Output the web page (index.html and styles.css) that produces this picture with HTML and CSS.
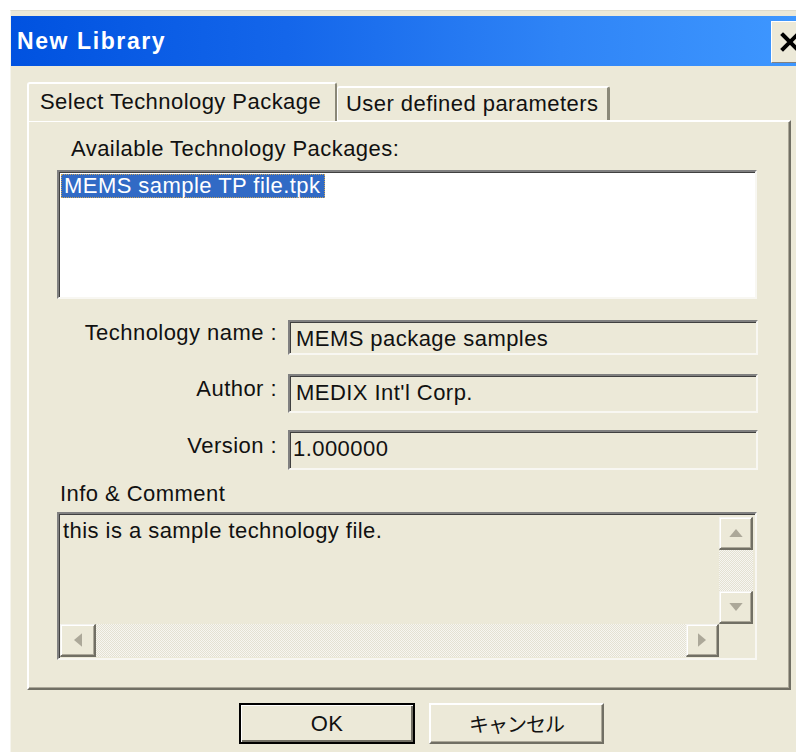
FILE: index.html
```html
<!DOCTYPE html>
<html lang="en">
<head>
<meta charset="utf-8">
<title>New Library</title>
<link rel="stylesheet" href="styles.css">
</head>
<body>
<div class="window">
  <div class="titlebar">
    <span class="title">New Library</span>
    <span class="close" aria-label="Close">
      <svg viewBox="0 0 20 20" width="20" height="20"><path d="M3 3 L17 17 M17 3 L3 17" stroke="#000" stroke-width="4" stroke-linecap="square"/></svg>
    </span>
  </div>
  <div class="client">
    <div class="tabs">
      <div class="tab active">Select Technology Package</div>
      <div class="tab">User defined parameters</div>
    </div>
    <div class="panel">
      <div class="caption list-caption">Available Technology Packages:</div>
      <div class="listbox sunken">
        <span class="item selected">MEMS sample TP file.tpk</span>
      </div>
      <div class="row row-name">
        <span class="label">Technology name :</span>
        <div class="field sunken">MEMS package samples</div>
      </div>
      <div class="row row-author">
        <span class="label">Author :</span>
        <div class="field sunken">MEDIX Int'l Corp.</div>
      </div>
      <div class="row row-version">
        <span class="label">Version :</span>
        <div class="field sunken">1.000000</div>
      </div>
      <div class="caption info-caption">Info &amp; Comment</div>
      <div class="memo sunken">
        <div class="memo-text">this is a sample technology file.</div>
        <div class="vscroll">
          <span class="sbtn"><svg viewBox="0 0 10 6" width="14" height="8"><path d="M5 0 L10 6 L0 6 Z" fill="#ACA899"/></svg></span>
          <span class="strack"></span>
          <span class="sbtn"><svg viewBox="0 0 10 6" width="14" height="8"><path d="M0 0 L10 0 L5 6 Z" fill="#ACA899"/></svg></span>
        </div>
        <div class="hscroll">
          <span class="sbtn wide"><svg viewBox="0 0 6 10" width="8" height="14"><path d="M6 0 L6 10 L0 5 Z" fill="#ACA899"/></svg></span>
          <span class="strack"></span>
          <span class="sbtn"><svg viewBox="0 0 6 10" width="8" height="14"><path d="M0 0 L6 5 L0 10 Z" fill="#ACA899"/></svg></span>
        </div>
        <div class="corner"></div>
      </div>
    </div>
    <div class="buttons">
      <button class="btn default" type="button"><span>OK</span></button>
      <button class="btn" type="button"><span class="jp">キャンセル</span></button>
    </div>
  </div>
</div>
</body>
</html>
```

FILE: styles.css
```css
html, body {
  margin: 0;
  padding: 0;
  background: #ffffff;
}

body {
  font-family: "Liberation Sans", "Noto Sans CJK JP", sans-serif;
  font-size: 22px;
  letter-spacing: 0.45px;
  color: #111111;
  overflow: hidden;
}

/* dialog frame */
.window {
  margin: 10px 0 0 10px;
  height: 742px;
  background: #ECE9D8;
  border-top: 1px solid #DEDBCB;
  border-left: 1px solid #F6F5EE;
  padding-top: 5px;
  box-sizing: border-box;
}

.titlebar {
  height: 50px;
  display: flex;
  align-items: center;
  background: linear-gradient(to right, #0052E0 0%, #1466EA 35%, #2F84F6 70%, #3E97FF 100%);
  padding-left: 6px;
}

.title {
  color: #ffffff;
  font-weight: bold;
  font-size: 23px;
  letter-spacing: 1.6px;
}

.close {
  margin-left: auto;
  width: 24px;
  height: 40px;
  margin-top: 1px;
  background: #ECE9D8;
  border-top: 1px solid #ffffff;
  border-left: 1px solid #ffffff;
  border-bottom: 1px solid #808080;
  display: flex;
  align-items: center;
  justify-content: flex-end;
  overflow: hidden;
}

.close svg {
  margin-right: -4px;
}

.client {
  padding: 16px 0 0 16px;
}

/* tab strip */
.tabs {
  display: flex;
  align-items: flex-end;
  height: 38px;
}

.tab {
  box-sizing: border-box;
  background: #ECE9D8;
  border-top: 2px solid #ffffff;
  border-left: 2px solid #ffffff;
  border-right: 3px solid #8A8878;
  border-radius: 3px 3px 0 0;
  white-space: nowrap;
}

.tab.active {
  width: 310px;
  height: 39px;
  padding: 5px 0 0 11px;
  position: relative;
  z-index: 1;
  margin-bottom: -1px;
  border-right: 2px solid #8A8878;
}

.tab:not(.active) {
  width: 273px;
  height: 34px;
  padding: 3px 0 0 8px;
  border-left: 1px solid #ffffff;
}

.panel {
  box-sizing: border-box;
  width: 764px;
  height: 570px;
  border-top: 2px solid #ffffff;
  border-left: 2px solid #ffffff;
  border-right: 2px solid #716F64;
  border-bottom: 2px solid #716F64;
  box-shadow: inset -1px -1px 0 #ACA899;
  display: flex;
  flex-direction: column;
}

.caption {
  line-height: 24px;
}

.list-caption {
  margin: 15px 0 0 42px;
}

/* sunken 3D edge used by list, fields and memo */
.sunken {
  box-sizing: border-box;
  border-top: 2px solid #808080;
  border-left: 2px solid #808080;
  border-right: 2px solid #F8F7F2;
  border-bottom: 2px solid #F8F7F2;
  box-shadow: inset 1px 1px 0 #404040;
}

.listbox {
  margin: 9px 0 0 28px;
  width: 700px;
  height: 129px;
  background: #ffffff;
  padding: 1px 0 0 2px;
}

.item {
  display: inline-block;
  line-height: 24px;
  padding: 0 4px 0 3px;
}

.item.selected {
  background: #316AC5;
  color: #ffffff;
  outline: 1px dotted #C9A45A;
  outline-offset: -1px;
}

.row {
  display: flex;
  align-items: flex-start;
}

.label {
  width: 248px;
  text-align: right;
  padding-right: 11px;
  line-height: 24px;
}

.field {
  width: 470px;
  background: #ECE9D8;
  padding: 5px 0 0 6px;
  line-height: 24px;
  white-space: nowrap;
}

.row-name {
  margin-top: 21px;
}
.row-name .field { height: 35px; }
.row-name .label { margin-top: 1px; }

.row-author {
  margin-top: 19px;
}
.row-author .field { height: 39px; }
.row-author .label { margin-top: 3px; }

.row-version {
  margin-top: 17px;
}
.row-version .field { height: 40px; padding-left: 3px; }
.row-version .label { margin-top: 4px; }

.info-caption {
  margin: 12px 0 0 31px;
}

/* multi-line comment box with both scrollbars */
.memo {
  margin: 6px 0 0 28px;
  width: 700px;
  height: 148px;
  background: #ECE9D8;
  display: grid;
  grid-template-columns: 1fr 34px;
  grid-template-rows: 1fr 33px;
  padding: 3px 2px 1px 1px;
}

.memo-text {
  padding: 2px 0 0 3px;
  line-height: 24px;
}

.vscroll {
  display: flex;
  flex-direction: column;
}

.hscroll {
  display: flex;
}

.corner {
  background: #ECE9D8;
}

.sbtn {
  box-sizing: border-box;
  flex: none;
  width: 34px;
  height: 33px;
  background: #ECE9D8;
  border-top: 1px solid #F4F3EE;
  border-left: 1px solid #F4F3EE;
  border-right: 2px solid #716F64;
  border-bottom: 2px solid #716F64;
  box-shadow: inset 1px 1px 0 #ffffff, inset -1px -1px 0 #ACA899;
  display: flex;
  align-items: center;
  justify-content: center;
}

.hscroll .sbtn {
  width: 33px;
}

.hscroll .sbtn.wide {
  width: 36px;
}

.strack {
  flex: 1;
  background: repeating-conic-gradient(#F7F6F1 0 25%, #E4E1D2 0 50%) 0 0 / 2px 2px;
}

/* dialog buttons */
.buttons {
  display: flex;
  gap: 14px;
  padding: 13px 0 0 212px;
}

.btn {
  box-sizing: border-box;
  height: 41px;
  width: 175px;
  margin: 0;
  padding: 0;
  font-family: "Liberation Sans", "Noto Sans CJK JP", sans-serif;
  font-size: 22px;
  letter-spacing: 0.45px;
  color: #111111;
  background: #ECE9D8;
  border-top: 2px solid #ffffff;
  border-left: 2px solid #ffffff;
  border-right: 2px solid #716F64;
  border-bottom: 2px solid #716F64;
  box-shadow: inset -1px -1px 0 #ACA899;
}

.btn .jp {
  font-size: 20px;
  letter-spacing: -1px;
}

.btn.default {
  width: 176px;
  border: 2px solid #000000;
  box-shadow: inset 1px 1px 0 #ffffff, inset -2px -2px 0 #716F64;
}
```
